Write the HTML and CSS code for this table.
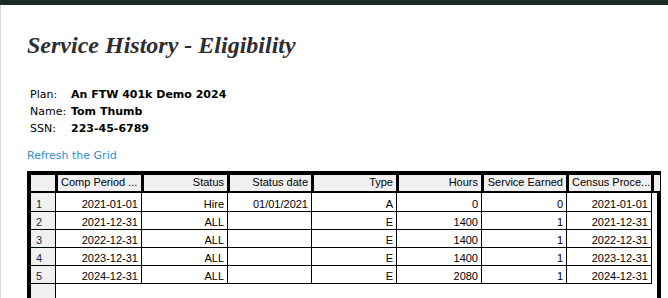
FILE: index.html
```
<!DOCTYPE html>
<html>
<head>
<meta charset="utf-8">
<link rel="stylesheet" href="styles.css">
</head>
<body>
<div class="topbar"></div>
<div class="page">
  <h1 class="title">Service History - Eligibility</h1>
  <div class="info">
    <div class="info-row"><span class="label">Plan:</span><span class="value">An FTW 401k Demo 2024</span></div>
    <div class="info-row"><span class="label">Name:</span><span class="value">Tom Thumb</span></div>
    <div class="info-row"><span class="label">SSN:</span><span class="value">223-45-6789</span></div>
  </div>
  <a class="refresh" href="#">Refresh the Grid</a>
  <div class="grid">
    <div class="row head">
      <div class="cell rn"></div>
      <div class="cell left">Comp Period ...</div>
      <div class="cell">Status</div>
      <div class="cell">Status date</div>
      <div class="cell">Type</div>
      <div class="cell">Hours</div>
      <div class="cell">Service Earned</div>
      <div class="cell left">Census Proce...</div>
      <div class="cell filler"></div>
    </div>
    <div class="row body first">
      <div class="cell rn">1</div>
      <div class="cell">2021-01-01</div>
      <div class="cell">Hire</div>
      <div class="cell">01/01/2021</div>
      <div class="cell">A</div>
      <div class="cell">0</div>
      <div class="cell">0</div>
      <div class="cell">2021-01-01</div>
      <div class="cell filler"></div>
    </div>
    <div class="row body">
      <div class="cell rn">2</div>
      <div class="cell">2021-12-31</div>
      <div class="cell">ALL</div>
      <div class="cell"></div>
      <div class="cell">E</div>
      <div class="cell">1400</div>
      <div class="cell">1</div>
      <div class="cell">2021-12-31</div>
      <div class="cell filler"></div>
    </div>
    <div class="row body">
      <div class="cell rn">3</div>
      <div class="cell">2022-12-31</div>
      <div class="cell">ALL</div>
      <div class="cell"></div>
      <div class="cell">E</div>
      <div class="cell">1400</div>
      <div class="cell">1</div>
      <div class="cell">2022-12-31</div>
      <div class="cell filler"></div>
    </div>
    <div class="row body">
      <div class="cell rn">4</div>
      <div class="cell">2023-12-31</div>
      <div class="cell">ALL</div>
      <div class="cell"></div>
      <div class="cell">E</div>
      <div class="cell">1400</div>
      <div class="cell">1</div>
      <div class="cell">2023-12-31</div>
      <div class="cell filler"></div>
    </div>
    <div class="row body">
      <div class="cell rn">5</div>
      <div class="cell">2024-12-31</div>
      <div class="cell">ALL</div>
      <div class="cell"></div>
      <div class="cell">E</div>
      <div class="cell">2080</div>
      <div class="cell">1</div>
      <div class="cell">2024-12-31</div>
      <div class="cell filler"></div>
    </div>
    <div class="row empty">
      <div class="cell rn"></div>
    </div>
  </div>
</div>
</body>
</html>
```
FILE: styles.css
```
html, body {
  margin: 0;
  padding: 0;
  background: #ffffff;
}

.topbar {
  height: 5px;
  background: #1b2a22;
}

.page {
  border-left: 1px solid #d6d6d6;
  padding: 26px 0 0 26px;
  min-height: 400px;
  box-sizing: border-box;
}

.title {
  margin: 0;
  font-family: "Liberation Serif", "Times New Roman", serif;
  font-size: 24px;
  line-height: 28px;
  font-weight: bold;
  font-style: italic;
  color: #2e2e2e;
}

.info {
  margin: 27px 0 0 3px;
  font-family: "DejaVu Sans", Verdana, sans-serif;
  font-size: 11px;
  line-height: 17px;
  color: #000;
}

.info-row {
  display: flex;
}

.label {
  width: 41px;
  flex: none;
}

.value {
  font-weight: bold;
}

.refresh {
  display: block;
  width: max-content;
  margin-top: 10px;
  font-family: "DejaVu Sans", Verdana, sans-serif;
  font-size: 11px;
  line-height: 17px;
  color: #2e8ed2;
  text-decoration: none;
}

.grid {
  margin-top: 7px;
  width: 634px;
  box-sizing: border-box;
  border: 4px solid #000;
  border-bottom: 0;
  font-family: "Liberation Sans", Arial, sans-serif;
  font-size: 11px;
  color: #000;
}

.row {
  display: grid;
  grid-template-columns: 25px 86px 86px 84px 85px 85px 85px 85px 5px;
}

.cell {
  box-sizing: border-box;
  white-space: nowrap;
  overflow: hidden;
  text-align: right;
  padding: 0 3px 0 3px;
}

.cell.left {
  text-align: left;
}

.head {
  background: #000;
  border-bottom: 2px solid #000;
}

.head .cell {
  height: 16px;
  line-height: 15px;
  background: #f0f0f0;
  border-left: 2px solid #000;
  border-right: 1px solid #000;
}

.head .cell.rn {
  border-left: 0;
}

.body .cell {
  height: 18px;
  line-height: 17px;
  padding-top: 2px;
  border-right: 1px solid #000;
  border-bottom: 1px solid #000;
}

.body.first .cell {
  height: 19px;
  padding-top: 3px;
}

.body .cell.filler {
  border-right: 0;
  border-bottom: 0;
}

.cell.rn {
  text-align: left;
  padding-left: 5px;
  background: #f0f0f0;
  color: #1c2a4a;
}

.empty .cell.rn {
  height: 40px;
  border-right: 1px solid #000;
}
```
